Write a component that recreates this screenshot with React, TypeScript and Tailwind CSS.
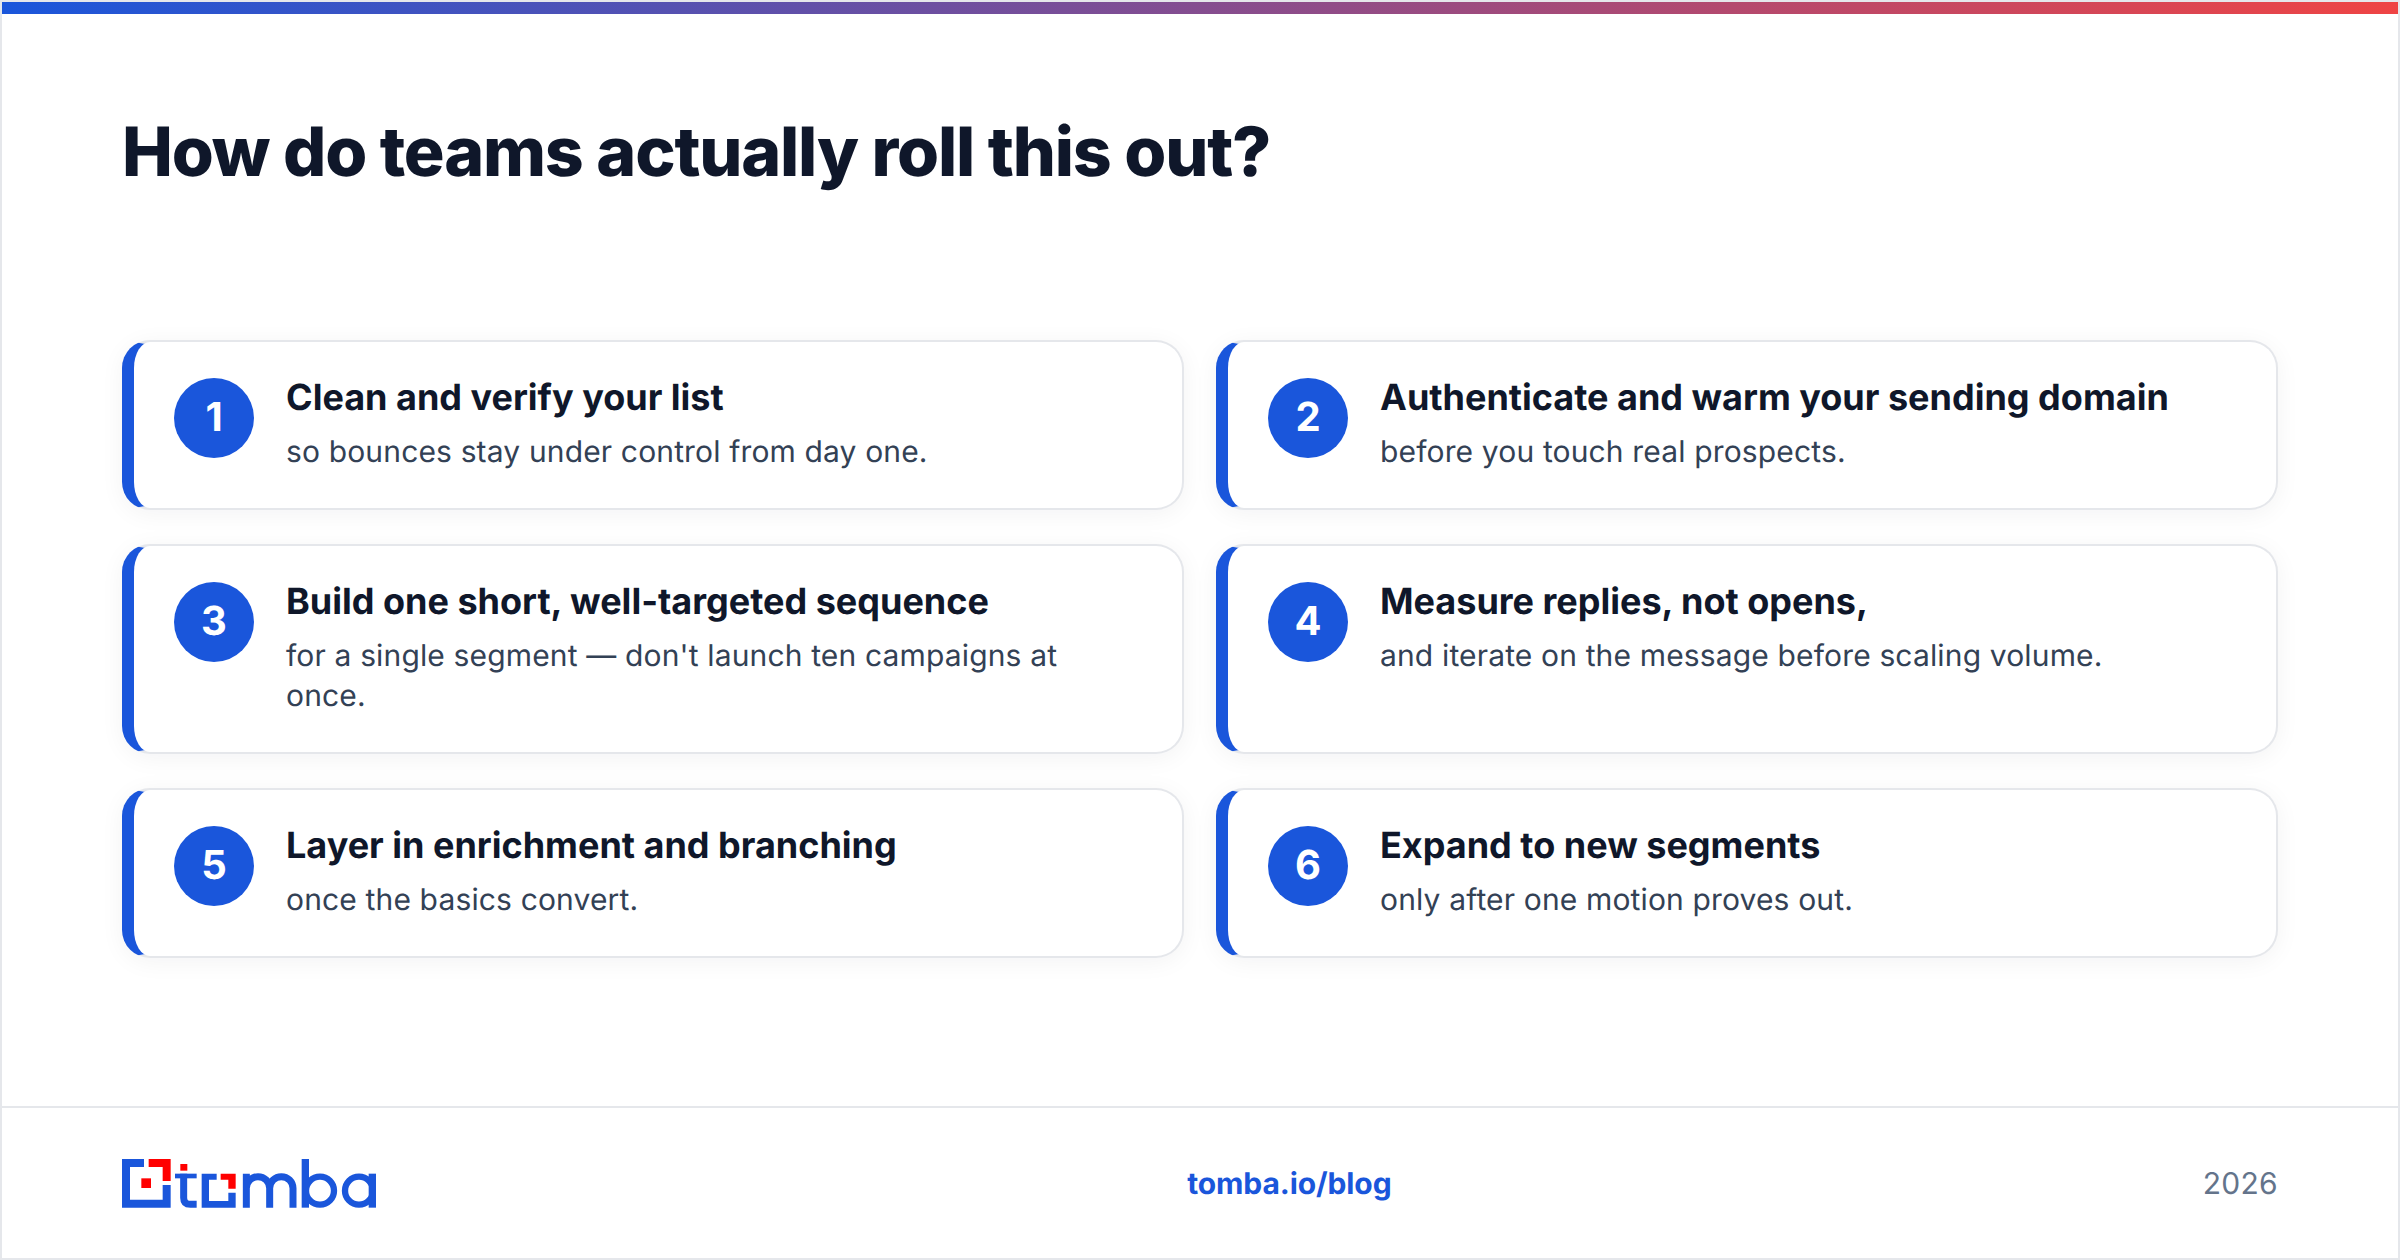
const steps = [
  { n: 1, title: 'Clean and verify your list', body: 'so bounces stay under control from day one.' },
  { n: 2, title: 'Authenticate and warm your sending domain', body: 'before you touch real prospects.' },
  { n: 3, title: 'Build one short, well-targeted sequence', body: "for a single segment — don't launch ten campaigns at once." },
  { n: 4, title: 'Measure replies, not opens,', body: 'and iterate on the message before scaling volume.' },
  { n: 5, title: 'Layer in enrichment and branching', body: 'once the basics convert.' },
  { n: 6, title: 'Expand to new segments', body: 'only after one motion proves out.' },
]

function Logo() {
  return (
    <svg width="254" height="49" viewBox="66 114 762 147" fill="none">
      {/* mark */}
      <path d="M132 114H66V260H212V192H188V236H90V138H132Z" fill="#1a56db" />
      <path d="M146 114H212V180H188V138H146Z" fill="#ff0000" />
      <rect x="124" y="172" width="29" height="29" fill="#ff0000" />
      {/* t */}
      <rect x="241" y="129" width="21" height="20" fill="#ff0000" />
      <path d="M225 165H290" stroke="#1a56db" strokeWidth="14" />
      <path d="M251 158V230Q251 250 271 250H290" stroke="#1a56db" strokeWidth="21" />
      {/* o */}
      <path d="M350 158H305V260H407V215H385V240H327V176H350Z" fill="#1a56db" />
      <path d="M362 158H407V203H385V176H362Z" fill="#ff0000" />
      {/* m */}
      <path d="M439 260V158M439 202a35 35 0 0 1 70 0V260M509 202a35 35 0 0 1 70 0V260" stroke="#1a56db" strokeWidth="21" />
      {/* b */}
      <path d="M616 114V260" stroke="#1a56db" strokeWidth="22" />
      <circle cx="660" cy="209" r="42" stroke="#1a56db" strokeWidth="19" />
      {/* a */}
      <circle cx="777" cy="209" r="42" stroke="#1a56db" strokeWidth="19" />
      <path d="M817 158V260" stroke="#1a56db" strokeWidth="22" />
    </svg>
  )
}

export default function App() {
  return (
    <div className="w-[2400px] h-[1260px] bg-white border-2 border-[#e5e7eb] flex flex-col font-['Inter',sans-serif] [text-rendering:geometricPrecision] overflow-hidden">
      <div className="h-3 shrink-0 bg-[linear-gradient(90deg,#1a56db,#ef4444)]" />

      <div className="flex-1 px-[120px] pt-[96px]">
        <h1 className="text-[68px] leading-[84px] font-extrabold tracking-[-1.19px] text-[#0f172a]">
          How do teams actually roll this out?
        </h1>

        <div className="mt-[146px] grid grid-cols-2 gap-x-8 gap-y-[34px]">
          {steps.map((step) => (
            <div
              key={step.n}
              className="flex items-start gap-8 rounded-[28px] border-2 border-l-[12px] border-[#e5e7eb] border-l-[#1a56db] bg-white px-10 py-9 shadow-[0_4px_24px_rgba(15,23,42,0.05)]"
            >
              <div className="w-20 h-20 shrink-0 rounded-full bg-[#1a56db] flex items-center justify-center pb-[2px] text-white text-[40px] font-bold">
                {step.n}
              </div>
              <div className="min-w-0">
                <div className="text-[36px] leading-[38px] font-bold text-[#0f172a]">{step.title}</div>
                <div className="mt-4 text-[30px] leading-[40px] tracking-[0.15px] text-[#334155]">{step.body}</div>
              </div>
            </div>
          ))}
        </div>
      </div>

      <div className="h-[152px] shrink-0 border-t-2 border-[#e5e7eb] px-[120px] flex items-center justify-between">
        <Logo />
        <div className="pt-[3px] text-[30px] tracking-[-0.1px] font-bold text-[#1a56db]">tomba.io/blog</div>
        <div className="pt-[3px] text-[30px] tracking-[0.3px] text-[#64748b]">2026</div>
      </div>
    </div>
  )
}
